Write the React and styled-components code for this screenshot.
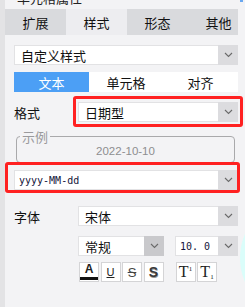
import styled, { createGlobalStyle } from "styled-components";

const GlobalStyle = createGlobalStyle`
  html, body {
    margin: 0;
    padding: 0;
    background: #f3f3f5;
    overflow: hidden;
  }
  * { box-sizing: border-box; }
`;

const cjk = `"Noto Sans CJK SC", "Noto Sans", sans-serif`;

function Chevron() {
  return (
    <svg width="9" height="6" viewBox="0 0 9 6">
      <polyline points="1,1 4.5,4.5 8,1" fill="none" stroke="#6a6a6a" strokeWidth="1.1" />
    </svg>
  );
}

function Select({ value, width, mono, dark }) {
  return (
    <SelectBox width={width}>
      <SelectText mono={mono}>{value}</SelectText>
      <ArrowBox dark={dark}><Chevron /></ArrowBox>
    </SelectBox>
  );
}

export default function App() {
  const tabs = ["扩展", "样式", "形态", "其他"];
  const segs = ["文本", "单元格", "对齐"];

  return (
    <>
      <GlobalStyle />
      <Frame>
        <Strip />
        <Panel>
          <Title><TitleText>单元格属性</TitleText><Pin /></Title>
          <Tabs>
            {tabs.map((t, i) => (
              <Tab key={t} active={i === 1}>{t}</Tab>
            ))}
          </Tabs>
          <Body>
            <Select value="自定义样式" />
            <Segmented>
              {segs.map((s, i) => (
                <Seg key={s} active={i === 0}>{s}</Seg>
              ))}
            </Segmented>
            <Row>
              <Label>格式</Label>
              <Marked>
                <Select value="日期型" />
                <RedBox left={-5} right={-5} top={-6} bottom={-5} />
              </Marked>
            </Row>
            <Sample>
              <Legend>示例</Legend>
              <SampleText>2022-10-10</SampleText>
            </Sample>
            <Marked>
              <Select value="yyyy-MM-dd" mono />
              <RedBox left={-9} right={-2} top={-8} bottom={-3} />
            </Marked>
            <FontRow>
              <Label>字体</Label>
              <Select value="宋体" />
            </FontRow>
            <SubRow>
              <Select value="常规" width={86} dark />
              <Select value="10. 0" width={63} mono />
            </SubRow>
            <ButtonRow>
              <Group>
                <StyleBtn><ColorA>A<Bar /></ColorA></StyleBtn>
                <StyleBtn><Under>U</Under></StyleBtn>
                <StyleBtn><Strike>S</Strike></StyleBtn>
                <StyleBtn><Shadow>S</Shadow></StyleBtn>
              </Group>
              <Group>
                <StyleBtn><Serif>T<sup>1</sup></Serif></StyleBtn>
                <StyleBtn><Serif>T<sub>1</sub></Serif></StyleBtn>
              </Group>
            </ButtonRow>
          </Body>
        </Panel>
        <Bubble />
      </Frame>
    </>
  );
}

const Frame = styled.div`
  position: relative;
  display: flex;
  width: 245px;
  height: 307px;
  overflow: hidden;
  background: #f3f3f5;
  font-family: ${cjk};
  color: #1a1a1a;
`;

const Strip = styled.div`
  width: 5px;
  flex: none;
  background: #e3e3e5;
`;

const Panel = styled.div`
  flex: 1;
  display: flex;
  flex-direction: column;
  min-width: 0;
`;

const Title = styled.div`
  position: relative;
  height: 9px;
  padding-left: 12px;
  overflow: hidden;
`;

const TitleText = styled.div`
  margin-top: -9px;
  font-size: 13px;
  line-height: 13px;
  color: #222;
  white-space: nowrap;
`;

const Pin = styled.span`
  position: absolute;
  right: 2px;
  top: 0;
  width: 3px;
  height: 2px;
  background: #6aa8f0;
`;

const Tabs = styled.div`
  display: flex;
  width: 233px;
  height: 26px;
  overflow: hidden;
`;

const Tab = styled.div`
  flex: none;
  width: 61px;
  display: flex;
  align-items: center;
  justify-content: center;
  font-size: 13px;
  background: ${({ active }) => (active ? "#ededf0" : "#d9dadd")};
  color: #111;
`;

const Body = styled.div`
  display: flex;
  flex-direction: column;
  padding: 10px 7px 0 9px;
`;

const SelectBox = styled.div`
  display: flex;
  width: ${({ width }) => (width ? `${width}px` : "100%")};
  height: 20px;
  background: #fff;
  border: 1px solid #e2e2e4;
  border-right: none;
`;

const SelectText = styled.div`
  flex: 1;
  display: flex;
  align-items: center;
  padding-left: ${({ mono }) => (mono ? "4px" : "6px")};
  font-family: ${({ mono }) => (mono ? `"DejaVu Sans Mono", "Liberation Mono", monospace` : cjk)};
  font-size: ${({ mono }) => (mono ? "10px" : "13px")};
  color: ${({ mono }) => (mono ? "#14143a" : "#111")};
  white-space: nowrap;
  overflow: hidden;
`;

const ArrowBox = styled.div`
  width: 20px;
  margin: -1px 0;
  display: flex;
  align-items: center;
  justify-content: center;
  background: ${({ dark }) => (dark ? "#c9c9cc" : "#dcdcdf")};
`;

const Segmented = styled.div`
  display: grid;
  grid-template-columns: 75px 74px 1fr;
  height: 20px;
  margin-top: 7px;
  background: #fff;
`;

const Seg = styled.div`
  display: flex;
  align-items: center;
  justify-content: center;
  font-size: 13px;
  background: ${({ active }) => (active ? "#4c9ff5" : "#fff")};
  color: ${({ active }) => (active ? "#fff" : "#111")};
`;

const Row = styled.div`
  display: grid;
  grid-template-columns: 64px 1fr;
  align-items: center;
  margin-top: 10px;
`;

const FontRow = styled(Row)`
  margin-top: 16px;
`;

const Label = styled.div`
  font-size: 13px;
  color: #111;
`;

const Marked = styled.div`
  position: relative;
`;

const RedBox = styled.div`
  position: absolute;
  left: ${({ left }) => left}px;
  right: ${({ right }) => right}px;
  top: ${({ top }) => top}px;
  bottom: ${({ bottom }) => bottom}px;
  border: 3px solid #ff2121;
  border-radius: 3px;
  pointer-events: none;
`;

const Sample = styled.fieldset`
  margin: 8px 3px 7px 2px;
  padding: 0 0 3px;
  border: 1px solid #a9a9ab;
  border-radius: 4px;
  min-width: 0;
`;

const Legend = styled.legend`
  margin-left: 3px;
  padding: 0 2px;
  font-size: 13px;
  line-height: 13px;
  color: #9a9a9c;
`;

const SampleText = styled.div`
  text-align: center;
  font-family: "Liberation Sans", Arial, sans-serif;
  font-size: 11.5px;
  line-height: 16px;
  color: #8e8e90;
`;

const SubRow = styled.div`
  display: flex;
  gap: 11px;
  margin-top: 10px;
  padding-left: 64px;
`;

const ButtonRow = styled.div`
  display: flex;
  gap: 12px;
  margin-top: 6px;
  padding-left: 65px;
`;

const Group = styled.div`
  display: flex;
  gap: 1.5px;
`;

const StyleBtn = styled.div`
  width: 20px;
  height: 20px;
  background: #fff;
  border: 1px solid #d4d4d6;
  display: flex;
  align-items: center;
  justify-content: center;
  font-family: "Liberation Sans", Arial, sans-serif;
  font-size: 13px;
  color: #222;
`;

const ColorA = styled.span`
  position: relative;
  display: flex;
  flex-direction: column;
  align-items: center;
  font-weight: bold;
  font-size: 12px;
  line-height: 12px;
  margin-top: -2px;
`;

const Bar = styled.span`
  width: 18px;
  height: 3px;
  margin-top: 2px;
  background: #111;
`;

const Under = styled.span`
  text-decoration: underline;
  font-size: 11px;
`;

const Strike = styled.span`
  text-decoration: line-through;
  font-size: 13px;
  color: #444;
`;

const Shadow = styled.span`
  font-weight: bold;
  font-size: 14px;
  color: #3a3a3a;
  text-shadow: 0.5px 0.5px 0 #999;
`;

const Serif = styled.span`
  font-family: "Liberation Serif", "Times New Roman", serif;
  font-size: 16px;
  color: #222;
  sup, sub {
    font-size: 7px;
  }
  sup { vertical-align: 6px; }
  sub { vertical-align: -2px; }
`;

const Bubble = styled.div`
  position: absolute;
  left: 240px;
  top: 198px;
  width: 120px;
  height: 120px;
  border-radius: 50%;
  background: #dafdfa;
`;
